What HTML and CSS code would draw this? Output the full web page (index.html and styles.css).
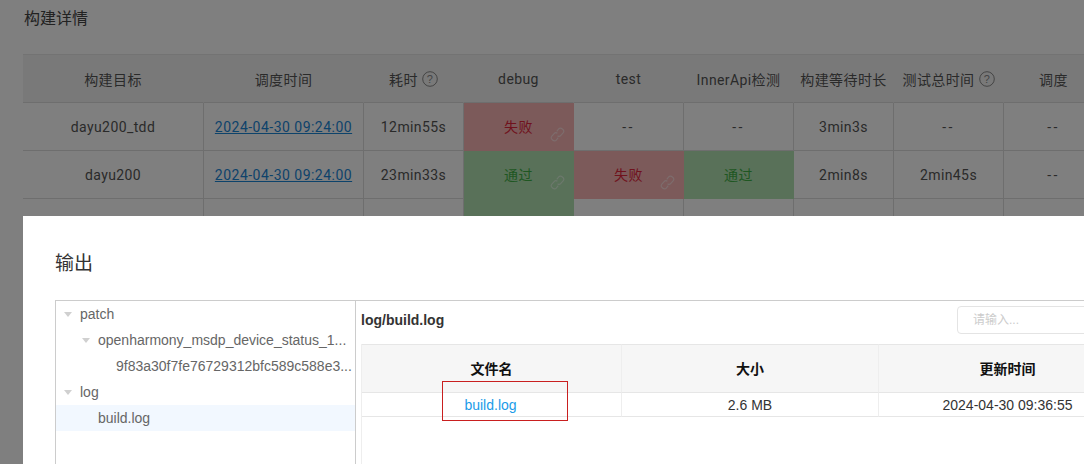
FILE: index.html
```html
<!DOCTYPE html>
<html lang="zh">
<head>
<meta charset="utf-8">
<title>构建详情</title>
<link rel="stylesheet" href="styles.css">
</head>
<body>
<main class="page">
  <h2 class="page-title">构建详情</h2>
  <div class="build-table">
    <div class="cell head">构建目标</div>
    <div class="cell head">调度时间</div>
    <div class="cell head">耗时<svg class="help" viewBox="0 0 16 16"><circle cx="8" cy="8" r="7.3"/><text x="8" y="12" text-anchor="middle">?</text></svg></div>
    <div class="cell head">debug</div>
    <div class="cell head">test</div>
    <div class="cell head">InnerApi检测</div>
    <div class="cell head">构建等待时长</div>
    <div class="cell head">测试总时间<svg class="help" viewBox="0 0 16 16"><circle cx="8" cy="8" r="7.3"/><text x="8" y="12" text-anchor="middle">?</text></svg></div>
    <div class="cell head">调度</div>

    <div class="cell">dayu200_tdd</div>
    <div class="cell"><a class="date" href="#">2024-04-30 09:24:00</a></div>
    <div class="cell">12min55s</div>
    <div class="cell fail">失败<svg class="chain" viewBox="0 0 16 16"><use href="#chain-shape"/></svg></div>
    <div class="cell dash">--</div>
    <div class="cell dash">--</div>
    <div class="cell">3min3s</div>
    <div class="cell dash">--</div>
    <div class="cell dash">--</div>

    <div class="cell">dayu200</div>
    <div class="cell"><a class="date" href="#">2024-04-30 09:24:00</a></div>
    <div class="cell">23min33s</div>
    <div class="cell pass">通过<svg class="chain" viewBox="0 0 16 16"><use href="#chain-shape"/></svg></div>
    <div class="cell fail">失败<svg class="chain" viewBox="0 0 16 16"><use href="#chain-shape"/></svg></div>
    <div class="cell pass">通过</div>
    <div class="cell">2min8s</div>
    <div class="cell">2min45s</div>
    <div class="cell dash">--</div>

    <div class="cell"></div>
    <div class="cell"></div>
    <div class="cell"></div>
    <div class="cell pass"></div>
    <div class="cell"></div>
    <div class="cell"></div>
    <div class="cell"></div>
    <div class="cell"></div>
    <div class="cell"></div>
  </div>
</main>

<div class="mask"></div>

<section class="modal">
  <h3 class="modal-title">输出</h3>
  <div class="panel">
    <ul class="tree">
      <li class="node"><span class="arrow"></span><span class="label">patch</span></li>
      <li class="node depth1"><span class="arrow"></span><span class="label">openharmony_msdp_device_status_1...</span></li>
      <li class="node depth2"><span class="label">9f83a30f7fe76729312bfc589c588e3...</span></li>
      <li class="node"><span class="arrow"></span><span class="label">log</span></li>
      <li class="node depth1 selected"><span class="label">build.log</span></li>
    </ul>
    <div class="files">
      <div class="files-bar">
        <strong class="path">log/build.log</strong>
        <input class="search" type="text" placeholder="请输入...">
      </div>
      <div class="files-table">
        <div class="fcell fhead">文件名</div>
        <div class="fcell fhead">大小</div>
        <div class="fcell fhead">更新时间</div>
        <div class="fcell"><a class="file-link" href="#">build.log</a></div>
        <div class="fcell">2.6 MB</div>
        <div class="fcell">2024-04-30 09:36:55</div>
        <div class="marker"></div>
      </div>
    </div>
  </div>
</section>

<svg class="defs" width="0" height="0" aria-hidden="true">
  <symbol id="chain-shape" viewBox="0 0 16 16">
    <path d="M7.2 4.6 9.3 2.1a2.5 2.5 0 0 1 3.6-.2l.9.8a2.5 2.5 0 0 1 .2 3.5L11.6 9a2.5 2.5 0 0 1-3.5.3" fill="none" stroke="currentColor" stroke-width="1.2"/>
    <path d="M8.8 11.4 6.7 13.9a2.5 2.5 0 0 1-3.6.2l-.9-.8A2.5 2.5 0 0 1 2 9.8L4.4 7a2.5 2.5 0 0 1 3.5-.3" fill="none" stroke="currentColor" stroke-width="1.2"/>
  </symbol>
</svg>
</body>
</html>
```

FILE: styles.css
```css
* { box-sizing: border-box; }
html, body { margin: 0; height: 464px; overflow: hidden; }
body {
  position: relative;
  width: 1084px;
  background: #fff;
  font-family: Roboto, "Noto Sans CJK SC", sans-serif;
  color: #333;
}
.page { padding: 8px 0 0 23px; width: 1200px; }
.page-title {
  margin: 0 0 24px;
  padding-left: 1px;
  height: 22px;
  line-height: 22px;
  font-size: 16px;
  font-weight: 400;
  color: #444;
}
.build-table {
  display: grid;
  grid-template-columns: 181px 160px 100px 110px 110px 110px 100px 110px 100px;
  grid-auto-rows: 48px;
  border-top: 1px solid #e6e6e6;
}
.cell {
  position: relative;
  display: flex;
  align-items: center;
  justify-content: center;
  font-size: 14px;
  letter-spacing: .4px;
  color: #555;
  border-right: 1px solid #ddd;
  border-bottom: 1px solid #ddd;
}
.head {
  background: #f3f3f3;
  border-right-color: #f3f3f3;
}
.dash { letter-spacing: 2.5px; }
.fail { background: #f8b4b4; color: #e0243a; border-color: #f8b4b4; padding-bottom: 2px; }
.pass { background: #b2e2b2; color: #3fae45; border-color: #b2e2b2; padding-bottom: 2px; }
.date { color: #1b86d6; text-decoration: underline; letter-spacing: .48px; }
.help {
  width: 16px;
  height: 16px;
  margin-left: 4px;
}
.help circle { fill: none; stroke: #888; stroke-width: 1; }
.help text { font-size: 11px; fill: #888; font-family: "Liberation Sans", sans-serif; }
.chain {
  position: absolute;
  right: 8px;
  bottom: 8px;
  width: 15px;
  height: 15px;
  color: rgba(255, 255, 255, .5);
}
.mask {
  position: absolute;
  inset: 0;
  background: rgba(0, 0, 0, .5);
}
.modal {
  position: absolute;
  left: 23px;
  top: 216px;
  width: 1100px;
  height: 300px;
  background: #fff;
  padding: 35px 32px 0;
  font-family: "Liberation Sans", "Noto Sans CJK SC", sans-serif;
}
.modal-title {
  margin: 0;
  height: 26px;
  line-height: 26px;
  font-size: 19px;
  font-weight: 400;
  color: #333;
}
.panel {
  display: flex;
  margin-top: 23px;
  height: 200px;
  border-top: 1px solid #ccc;
  border-left: 1px solid #ccc;
}
.tree {
  flex: none;
  width: 300px;
  margin: 0;
  padding: 0;
  list-style: none;
  border-right: 1px solid #ccc;
}
.node {
  display: flex;
  align-items: center;
  height: 26px;
  padding-left: 8px;
  font-size: 14px;
  color: #666;
}
.depth1 { padding-left: 26px; }
.depth2 { padding-left: 60px; }
.depth1.selected { padding-left: 42px; background: #f2f8ff; }
.arrow {
  flex: none;
  width: 0;
  height: 0;
  margin-right: 8px;
  border-left: 4px solid transparent;
  border-right: 4px solid transparent;
  border-top: 5px solid #d0d0d0;
}
.label { white-space: nowrap; }
.files { flex: 1; padding-left: 5px; min-width: 0; }
.files-bar {
  display: flex;
  align-items: flex-start;
  justify-content: space-between;
  height: 43px;
  padding-top: 5px;
}
.path { font-size: 14px; line-height: 28px; color: #333; }
.search {
  width: 200px;
  height: 28px;
  margin-right: -66px;
  padding: 0 15px;
  border: 1px solid #e4e4e4;
  border-radius: 4px;
  font: 12px "Liberation Sans", "Noto Sans CJK SC", sans-serif;
  outline: none;
}
.search::placeholder { color: #ccc; }
.files-table {
  position: relative;
  display: grid;
  grid-template-columns: 260px 257px 258px;
  grid-template-rows: 49px 24px;
  height: 200px;
  border-left: 1px solid #eee;
}
.fcell {
  display: flex;
  align-items: center;
  justify-content: center;
  font-size: 14px;
  color: #333;
  border-right: 1px solid #eee;
  border-bottom: 1px solid #e6e6e6;
}
.fhead {
  background: #f6f6f6;
  padding-bottom: 2px;
  font-weight: 700;
  color: #111;
  border-top: 1px solid #e6e6e6;
}
.file-link { color: #1a9be8; text-decoration: none; margin-right: 2px; }
.marker {
  position: absolute;
  left: 80px;
  top: 37px;
  width: 126px;
  height: 40px;
  border: 1px solid #c91f1f;
}
.defs { position: absolute; }
```
